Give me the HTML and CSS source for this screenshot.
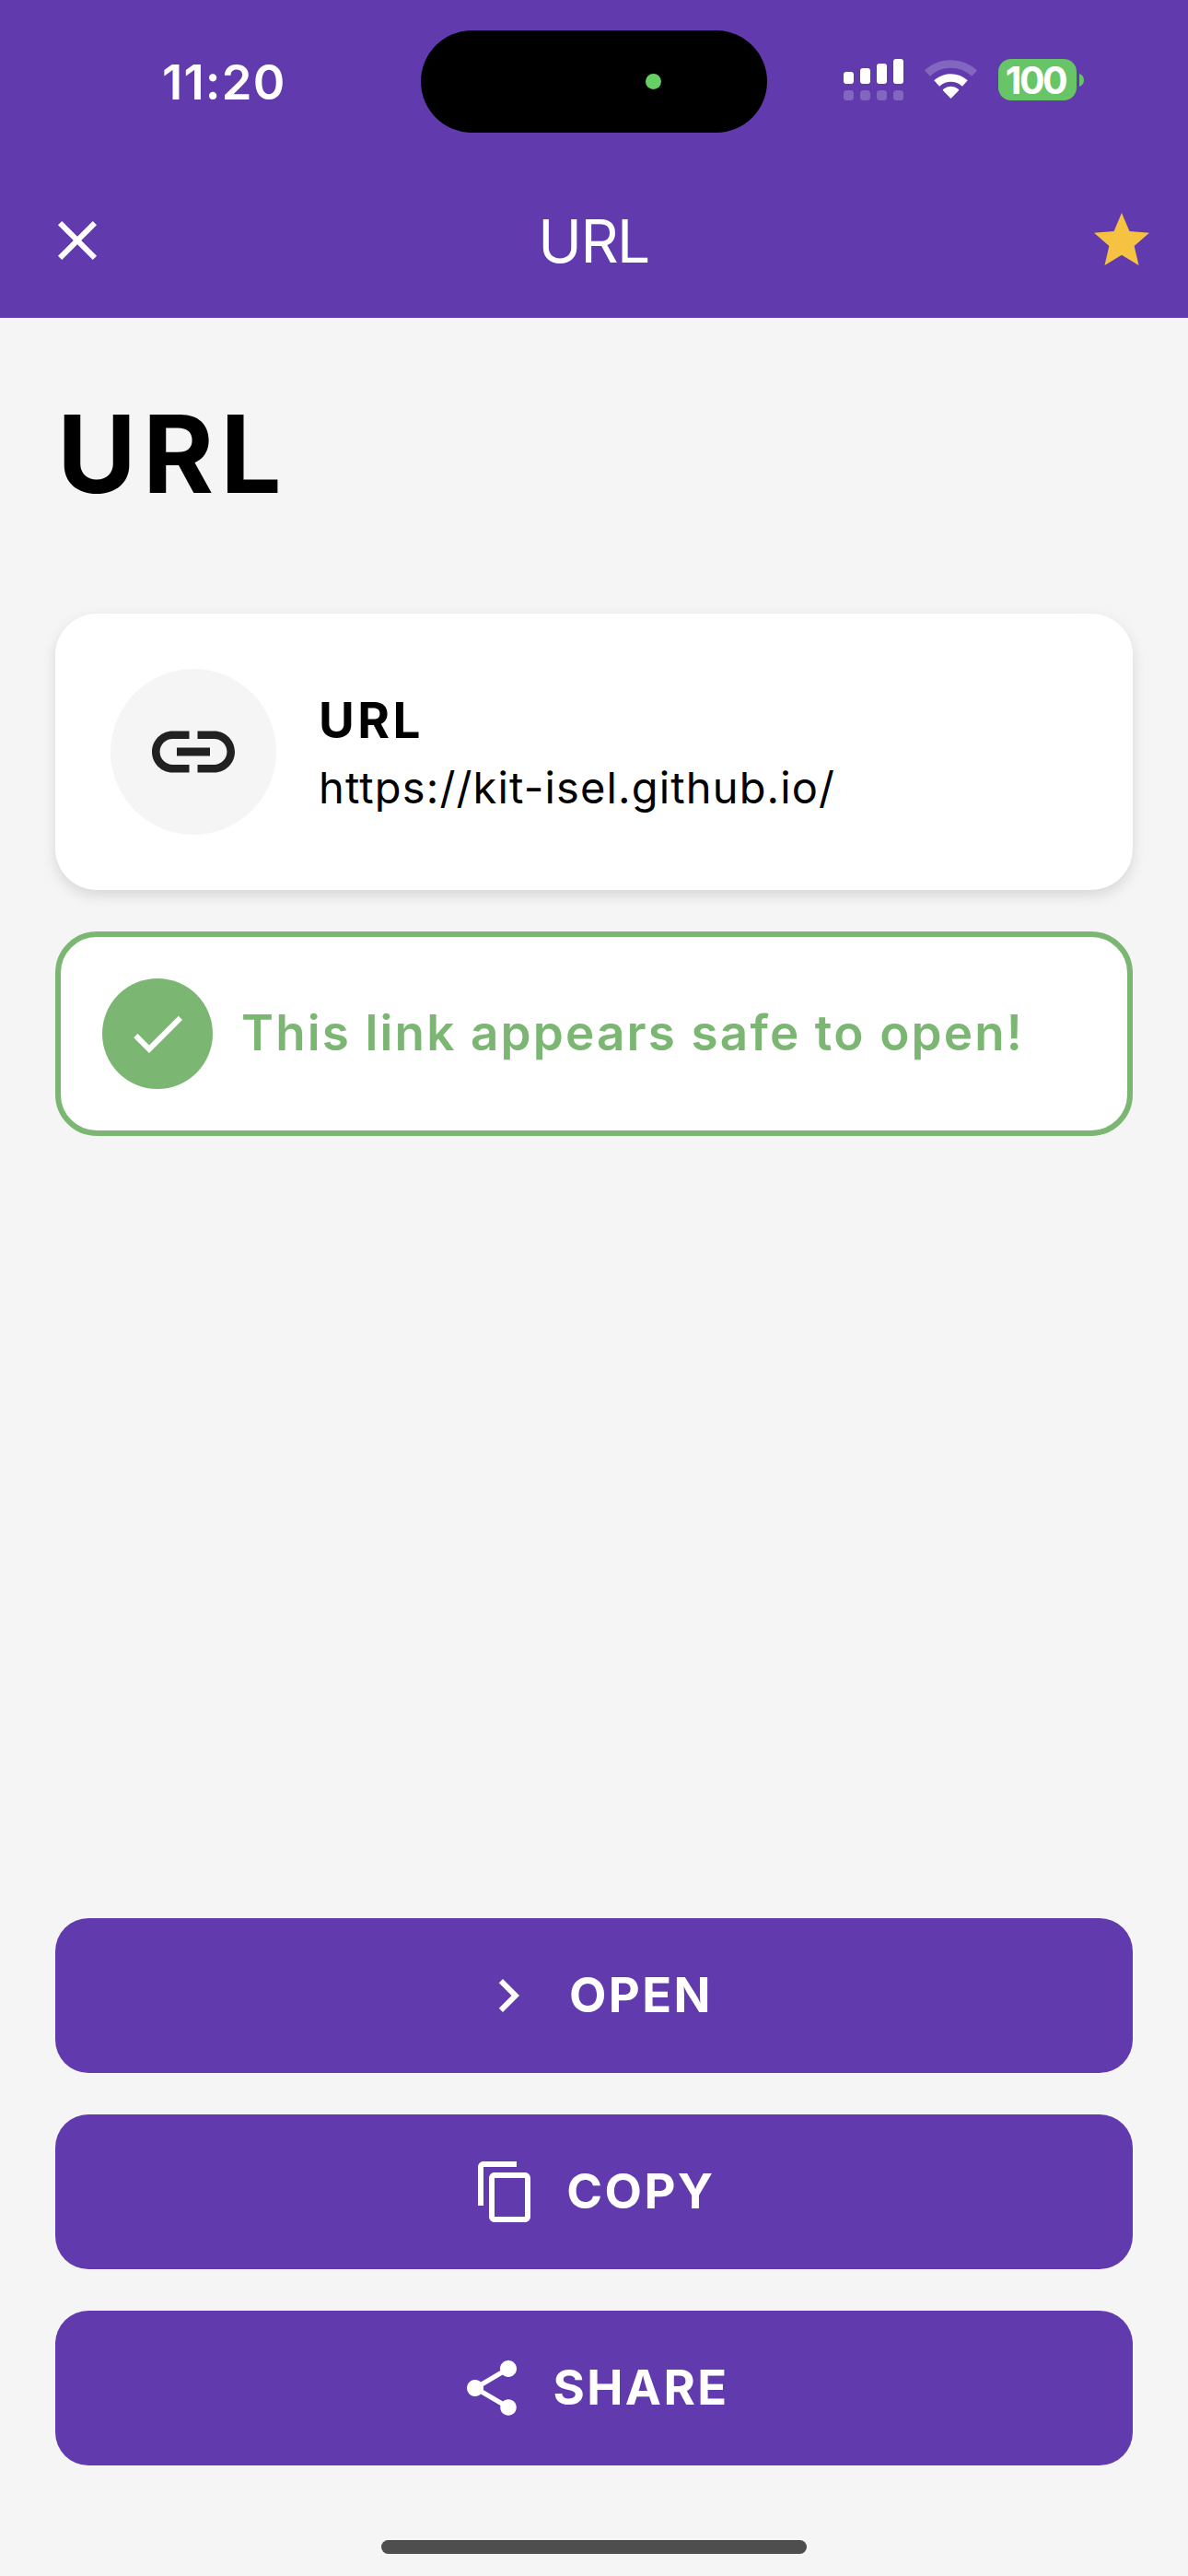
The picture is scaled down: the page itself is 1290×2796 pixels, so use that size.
FILE: index.html
```html
<!DOCTYPE html>
<html lang="en">
<head>
<meta charset="utf-8">
<title>URL</title>
<link rel="stylesheet" href="styles.css">
</head>
<body>
<div class="screen">
  <header class="header">
    <div class="status">
      <div class="time">11:20</div>
      <div class="island"><span class="island-dot"></span></div>
      <div class="indicators">
        <svg class="signal" viewBox="0 0 65 45" width="65" height="45" fill="#fff">
          <rect x="0" y="14" width="11" height="13" rx="3"/>
          <rect x="18" y="10" width="11" height="17" rx="3"/>
          <rect x="36" y="5" width="11" height="22" rx="3"/>
          <rect x="54" y="0" width="11" height="27" rx="3"/>
          <g fill-opacity=".22">
            <rect x="0" y="34" width="11" height="11" rx="3.5"/>
            <rect x="18" y="34" width="11" height="11" rx="3.5"/>
            <rect x="36" y="34" width="11" height="11" rx="3.5"/>
            <rect x="54" y="34" width="11" height="11" rx="3.5"/>
          </g>
        </svg>
        <svg class="wifi" viewBox="0 0 59 45" width="59" height="45" fill="none" stroke="#fff">
          <path d="M3.9 15.6a37.5 37.5 0 0 1 51.2 0" stroke-width="8.6" stroke-opacity=".22"/>
          <path d="M14.2 26.5a22.5 22.5 0 0 1 30.6 0" stroke-width="8.6"/>
          <path d="M29.5 43L21 34.2q-.6-.8.3-1.5a13 13 0 0 1 16.4 0q.9.7.3 1.5z" fill="#fff" stroke="none"/>
        </svg>
        <div class="battery">
          <div class="battery-body">100</div>
          <svg viewBox="0 0 5 14" width="5" height="14"><path d="M0 0q5 2 5 7t-5 7z" fill="#67c567"/></svg>
        </div>
      </div>
    </div>
    <nav class="nav">
      <svg class="icon" viewBox="0 0 24 24" fill="#fff"><path d="M19 6.41L17.59 5 12 10.59 6.41 5 5 6.41 10.59 12 5 17.59 6.41 19 12 13.41 17.59 19 19 17.59 13.41 12z"/></svg>
      <div class="nav-title">URL</div>
      <svg class="icon" viewBox="0 0 24 24" fill="#f5c242"><path d="M12 17.27L18.18 21l-1.64-7.03L22 9.24l-7.19-.61L12 2 9.19 8.63 2 9.24l5.46 4.73L5.82 21z"/></svg>
    </nav>
  </header>
  <main class="content">
    <h1 class="heading">URL</h1>
    <section class="card">
      <div class="card-icon">
        <svg viewBox="0 0 24 24" width="108" height="108" fill="#212121"><path d="M3.9 12c0-1.71 1.39-3.1 3.1-3.1h4V7H7c-2.76 0-5 2.24-5 5s2.24 5 5 5h4v-1.9H7c-1.71 0-3.1-1.39-3.1-3.1zM8 13h8v-2H8v2zm9-6h-4v1.9h4c1.71 0 3.1 1.39 3.1 3.1s-1.39 3.1-3.1 3.1h-4V17h4c2.76 0 5-2.24 5-5s-2.24-5-5-5z"/></svg>
      </div>
      <div class="card-text">
        <div class="card-title">URL</div>
        <div class="card-link">https://kit-isel.github.io/</div>
      </div>
    </section>
    <section class="safe">
      <div class="safe-icon">
        <svg class="icon" viewBox="0 0 24 24" fill="#fff"><path d="M9 16.17L4.83 12l-1.42 1.41L9 19 21 7l-1.41-1.41z"/></svg>
      </div>
      <div class="safe-text">This link appears safe to open!</div>
    </section>
    <div class="actions">
      <button class="button" type="button">
        <svg class="icon" viewBox="0 0 24 24" fill="#fff"><path d="M10 6L8.59 7.41 13.17 12l-4.58 4.59L10 18l6-6z"/></svg>
        <span class="label">OPEN</span>
      </button>
      <button class="button" type="button">
        <svg class="icon" viewBox="0 0 24 24" fill="#fff"><path d="M16 1H4c-1.1 0-2 .9-2 2v14h2V3h12V1zm3 4H8c-1.1 0-2 .9-2 2v14c0 1.1.9 2 2 2h11c1.1 0 2-.9 2-2V7c0-1.1-.9-2-2-2zm0 16H8V7h11v14z"/></svg>
        <span class="label">COPY</span>
      </button>
      <button class="button" type="button">
        <svg class="icon" viewBox="0 0 24 24" fill="#fff"><path d="M18 16.08c-.76 0-1.44.3-1.96.77L8.91 12.7c.05-.23.09-.46.09-.7s-.04-.47-.09-.7l7.05-4.11c.54.5 1.25.81 2.04.81 1.66 0 3-1.34 3-3s-1.34-3-3-3-3 1.34-3 3c0 .24.04.47.09.7L8.04 9.81C7.5 9.31 6.79 9 6 9c-1.66 0-3 1.34-3 3s1.34 3 3 3c.79 0 1.5-.31 2.04-.81l7.12 4.16c-.05.21-.08.43-.08.65 0 1.61 1.31 2.92 2.92 2.92s2.92-1.31 2.92-2.92-1.31-2.92-2.92-2.92z"/></svg>
        <span class="label">SHARE</span>
      </button>
    </div>
  </main>
  <div class="home"></div>
</div>
</body>
</html>
```
FILE: styles.css
```css
* {
  box-sizing: border-box;
}

body {
  margin: 0;
  font-family: Inter, "Liberation Sans", sans-serif;
  background: #f5f5f5;
}

svg {
  display: block;
  flex: none;
}

.screen {
  width: 1290px;
  height: 2796px;
  display: flex;
  flex-direction: column;
  overflow: hidden;
}

.header {
  height: 345px;
  background: #613bae;
  color: #fff;
}

.status {
  height: 177px;
  display: grid;
  grid-template-columns: 457px 376px 457px;
}

.time {
  padding: 57px 0 0 176px;
  font-size: 52.5px;
  line-height: 64px;
  font-weight: 600;
  letter-spacing: 1.2px;
}

.island {
  height: 111px;
  margin-top: 33px;
  padding-right: 115px;
  border-radius: 56px;
  background: #000;
  display: flex;
  align-items: center;
  justify-content: flex-end;
}

.island-dot {
  width: 17px;
  height: 17px;
  border-radius: 50%;
  background: #67d065;
}

.indicators {
  display: flex;
  align-items: flex-start;
  padding: 64px 0 0 83px;
}

.wifi {
  margin-left: 22px;
}

.battery {
  margin-left: 22px;
  display: flex;
  align-items: center;
  gap: 3px;
}

.battery-body {
  width: 85px;
  height: 45px;
  padding-right: 4px;
  border-radius: 14px;
  background: #67c567;
  font-size: 41px;
  line-height: 46px;
  font-weight: 700;
  letter-spacing: -2.5px;
  text-align: center;
}

.nav {
  height: 168px;
  padding: 0 36px 0 48px;
  display: grid;
  grid-template-columns: 72px 1fr 72px;
  align-items: center;
}

.icon {
  width: 72px;
  height: 72px;
}

.nav-title {
  padding-right: 13px;
  text-align: center;
  font-size: 64px;
  font-weight: 400;
  letter-spacing: -1.5px;
}

.content {
  flex: 1;
  padding: 0 60px;
  display: flex;
  flex-direction: column;
}

.heading {
  height: 321px;
  margin: 0;
  padding: 77px 0 0 2px;
  font-size: 117.5px;
  line-height: 140px;
  font-weight: 700;
  letter-spacing: 7px;
}

.card {
  height: 300px;
  padding: 0 60px;
  display: flex;
  align-items: center;
  gap: 46px;
  border-radius: 45px;
  background: #fff;
  box-shadow: 0 6px 15px rgba(0, 0, 0, .12);
}

.card-icon {
  width: 180px;
  height: 180px;
  border-radius: 50%;
  background: #f5f5f5;
  display: flex;
  align-items: center;
  justify-content: center;
}

.card-text {
  padding-top: 7px;
}

.card-title {
  font-size: 53px;
  line-height: 70px;
  font-weight: 700;
  letter-spacing: 3.4px;
}

.card-link {
  font-size: 47px;
  line-height: 76px;
  letter-spacing: 1.15px;
}

.safe {
  height: 222px;
  margin-top: 45px;
  padding: 0 45px;
  display: flex;
  align-items: center;
  gap: 31px;
  border: 6px solid #7bb773;
  border-radius: 45px;
  background: #fff;
}

.safe-icon {
  width: 120px;
  height: 120px;
  border-radius: 50%;
  background: #7bb773;
  display: flex;
  align-items: center;
  justify-content: center;
}

.safe-text {
  padding-bottom: 3px;
  font-size: 53px;
  font-weight: 600;
  letter-spacing: 2.15px;
  color: #7bb773;
  white-space: nowrap;
}

.actions {
  margin-top: auto;
  display: flex;
  flex-direction: column;
  gap: 45px;
}

.button {
  height: 168px;
  padding: 0;
  border: 0;
  border-radius: 36px;
  background: #613bae;
  color: #fff;
  font: 700 52.5px Inter, "Liberation Sans", sans-serif;
  display: flex;
  align-items: center;
  justify-content: center;
  gap: 30px;
}

.label {
  padding-bottom: 2px;
  letter-spacing: 2.4px;
}

.home {
  width: 462px;
  height: 15px;
  margin: 81px auto 24px;
  border-radius: 8px;
  background: #4e4e4e;
}
```
